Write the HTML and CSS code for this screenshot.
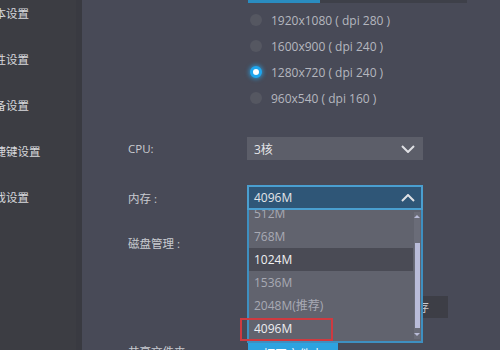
FILE: index.html
```html
<!DOCTYPE html>
<html lang="zh-CN">
<head>
  <meta charset="UTF-8">
  <meta name="viewport" content="width=device-width, initial-scale=1.0">
  <title>设置</title>
  <link rel="stylesheet" href="styles.css">
</head>
<body>
  <div class="app">
    <aside class="sidebar">
      <ul class="nav">
        <li>基本设置</li>
        <li>属性设置</li>
        <li>设备设置</li>
        <li>快捷键设置</li>
        <li>游戏设置</li>
      </ul>
    </aside>

    <main class="main">
      <div class="res-tabs">
        <span class="tab active"></span>
        <span class="tab"></span>
      </div>

      <ul class="radios">
        <li><span class="dot"></span>1920x1080 ( dpi 280 )</li>
        <li><span class="dot"></span>1600x900 ( dpi 240 )</li>
        <li class="checked"><span class="dot"></span>1280x720 ( dpi 240 )</li>
        <li><span class="dot"></span>960x540 ( dpi 160 )</li>
      </ul>

      <div class="form">
        <div class="row cpu">
          <label>CPU:</label>
          <div class="select">
            <span>3核</span>
            <svg width="14" height="8" viewBox="0 0 14 8"><polyline points="1,1 7,7 13,1" /></svg>
          </div>
        </div>

        <div class="row mem">
          <label>内存 :</label>
          <div class="select-wrap">
            <div class="select open">
              <span>4096M</span>
              <svg width="14" height="8" viewBox="0 0 14 8"><polyline points="1,7 7,1 13,7" /></svg>
            </div>
            <div class="dropdown">
              <ul class="options">
                <li>512M</li>
                <li>768M</li>
                <li class="hover">1024M</li>
                <li>1536M</li>
                <li>2048M(推荐)</li>
                <li class="current">4096M</li>
              </ul>
              <div class="scrollbar">
                <span class="arrow up"></span>
                <span class="thumb"></span>
                <span class="arrow down"></span>
              </div>
            </div>
            <div class="mark"></div>
          </div>
        </div>

        <div class="row disk">
          <label>磁盘管理 :</label>
        </div>

        <div class="row clean">
          <span></span>
          <button class="btn-dark">清理磁盘缓存</button>
        </div>

        <div class="row save">
          <label>共享文件夹 :</label>
          <button class="btn-blue">打开文件夹</button>
        </div>
      </div>
    </main>
  </div>
</body>
</html>
```

FILE: styles.css
```css
body { margin: 0; width: 500px; height: 350px; overflow: hidden; background: #484a57; font-family: "Open Sans", "Noto Sans CJK SC", sans-serif; font-size: 12px; }
ul { list-style: none; margin: 0; padding: 0; }
.app { display: flex; height: 350px; }

.sidebar { width: 76px; flex: none; background: #3c3d43; border-right: 6px solid #393a41; overflow: hidden; }
.nav { margin-top: -10px; }
.nav li { height: 46px; line-height: 46px; margin-left: -17px; white-space: nowrap; color: #d8d9dd; font-size: 11.5px; font-family: "Noto Sans CJK SC", sans-serif; }

.main { flex: 1; padding-left: 46px; position: relative; }

.res-tabs { display: flex; height: 3px; margin-left: 120px; }
.tab { width: 147px; background: #3e4049; }
.tab.active { width: 72px; background: #2a8cc0; }

.radios { margin: 4px 0 0 122px; }
.radios li { height: 26px; display: flex; align-items: center; color: #b5b7bf; white-space: nowrap; }
.dot { width: 12px; height: 12px; border-radius: 50%; background: #555761; margin-right: 9px; box-sizing: border-box; }
.checked .dot { background: #fff; border: 3.5px solid #1fa6ee; box-shadow: 0 0 4px 1px rgba(40, 170, 240, 0.7); }

.form { margin-top: 26px; }
.row { display: grid; grid-template-columns: 119px 176px; align-items: center; }
.row label { color: #c9cad0; font-size: 11.5px; white-space: nowrap; }
.cpu { height: 23px; }
.mem { height: 25px; margin-top: 25px; }
.disk { height: 22px; margin-top: 22px; }
.clean { height: 22px; margin-top: 42px; }
.save { height: 22px; margin-top: 25px; align-items: start; }

.select { height: 23px; box-sizing: border-box; background: #5c5e69; color: #e4e5e8; display: flex; align-items: center; justify-content: space-between; padding: 0 8px 0 7px; }
.select svg polyline { fill: none; stroke: #dfe0e4; stroke-width: 2; }
.select-wrap { position: relative; }
.select.open { height: 25px; background: #2f5677; border: 2px solid #4a9fd0; padding-left: 5px; padding-right: 6px; }

.dropdown { position: absolute; left: 0; top: 25px; width: 176px; height: 133px; box-sizing: border-box; background: #61636e; border: 2px solid #3e8fc0; border-top: none; overflow: hidden; z-index: 2; }
.options { margin-top: -8px; margin-right: 8px; }
.options li { height: 23px; line-height: 23px; padding-left: 5px; color: #a8aab4; }
.options li.hover { background: #4a4b55; color: #f0f0f2; }
.options li.current { color: #eeeef1; }

.scrollbar { position: absolute; right: 1px; top: 2px; bottom: 2px; width: 6px; background: #6a6c78; display: flex; flex-direction: column; align-items: center; }
.arrow { width: 0; height: 0; border-left: 3px solid transparent; border-right: 3px solid transparent; margin: 3px 0; }
.arrow.up { border-bottom: 3px solid #b9bcd8; }
.arrow.down { border-top: 3px solid #b9bcd8; }
.thumb { width: 5px; flex: 1; background: #b9bcd9; margin: 22px 0 2px; }

.mark { position: absolute; left: -7px; top: 133px; width: 93px; height: 23px; box-sizing: border-box; border: 2px solid #cf3a40; z-index: 3; }

button { font-family: inherit; font-size: 12px; border: none; padding: 0; }
.btn-dark { width: 110px; height: 22px; margin-left: 91px; background: #3d3e46; color: #c9cad0; }
.btn-blue { width: 90px; height: 22px; margin-left: 1px; background: #2da3e0; color: #fff; }
```
